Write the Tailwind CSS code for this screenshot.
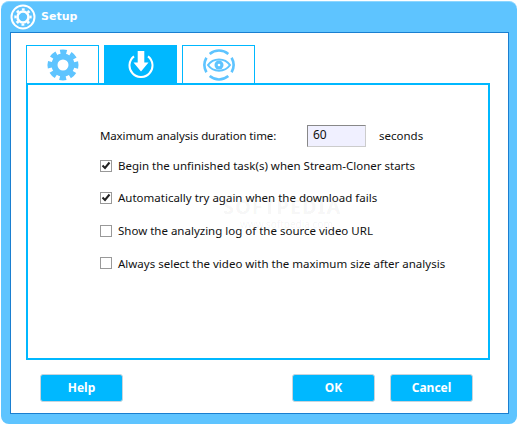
<!DOCTYPE html>
<html>
<head>
<meta charset="utf-8">
<title>Setup</title>
<script src="https://cdn.jsdelivr.net/npm/@tailwindcss/browser@4"></script>
</head>
<body class="bg-white">
<div class="w-[518px] h-[425px] bg-white pl-px pt-px font-['Noto_Sans','DejaVu_Sans',sans-serif] text-[11.5px] text-[#111]">
    <!-- window frame -->
    <div class="w-[516px] h-[423px] bg-[#5ec4ff] rounded-[8px] border-t border-t-[#8dd6ff] pl-[9px]">
        <!-- title bar -->
        <div class="h-[30px] flex items-center gap-[5px]">
            <svg width="26" height="26" viewBox="0 0 26 26">
                <circle cx="13" cy="13" r="11.5" fill="none" stroke="#fff" stroke-width="2"/>
                <circle cx="13" cy="13" r="5.5" fill="none" stroke="#fff" stroke-width="2.6"/>
                <circle cx="13" cy="13" r="7.6" fill="none" stroke="#fff" stroke-width="2.2" stroke-dasharray="2.8 3.17" transform="rotate(-10.5 13 13)"/>
            </svg>
            <span class="text-white font-bold text-[11px] font-['DejaVu_Sans',sans-serif]">Setup</span>
        </div>
        <!-- client area -->
        <div class="w-[499px] h-[382px] bg-white border border-[#1a7fd0] pt-[12px] pl-[15px] relative">
            <!-- tabs -->
            <div class="flex gap-[5px] h-[38px]">
                <div class="w-[73px] border border-b-0 border-[#00b8ff] flex items-center justify-center">
                    <svg width="32" height="32" viewBox="0 0 32 32">
                        <circle cx="16" cy="16" r="8.5" fill="none" stroke="#5ec4ff" stroke-width="6"/>
                        <circle cx="16" cy="16" r="12.5" fill="none" stroke="#5ec4ff" stroke-width="6" stroke-dasharray="6 3.82" transform="rotate(-13.75 16 16)"/>
                    </svg>
                </div>
                <div class="w-[73px] bg-[#00b8ff] flex items-center justify-center">
                    <svg width="28" height="28" viewBox="0 0 28 28">
                        <path d="M7 6.4A11.5 11.5 0 1 0 21 6.4" fill="none" stroke="#fff" stroke-width="2"/>
                        <path d="M10.7 1h6.6v11.5h4.2L14 21.5 6.5 12.5h4.2z" fill="#fff"/>
                    </svg>
                </div>
                <div class="w-[73px] border border-b-0 border-[#00b8ff] flex items-center justify-center">
                    <svg width="32" height="32" viewBox="0 0 32 32">
                        <path d="M6.68 4.89A14.5 14.5 0 0 1 25.32 4.89M28.56 8.75A14.5 14.5 0 0 1 28.56 23.25M25.32 27.11A14.5 14.5 0 0 1 6.68 27.11M3.44 23.25A14.5 14.5 0 0 1 3.44 8.75" fill="none" stroke="#5ec4ff" stroke-width="2.6"/>
                        <path d="M5 16C10 8.5 22 8.5 27 16C22 23.5 10 23.5 5 16Z" fill="#fff" stroke="#5ec4ff" stroke-width="2"/>
                        <circle cx="16" cy="16" r="4.5" fill="#5ec4ff"/>
                        <circle cx="16" cy="16" r="1.3" fill="#fff"/>
                    </svg>
                </div>
            </div>
            <!-- panel -->
            <div class="w-[464px] h-[277px] border-2 border-[#00b8ff] pl-[72px] pt-[40px]">
                <div class="flex items-center h-[22px] whitespace-nowrap">
                    <span class="w-[177px] tracking-[-0.13px]">Maximum analysis duration time:</span>
                    <div class="ml-[30px] w-[59px] h-[22px] bg-[#f0f0ff] border border-[#ccc] border-l-[#888] border-t-[#888] pl-[5px] leading-[18px] text-[12px]">60</div>
                    <span class="ml-[13px]">seconds</span>
                </div>
                <div class="flex flex-col gap-[15.6px] mt-[10px]">
                    <label class="flex items-center gap-[6px] h-[17px]">
                        <span class="w-[12px] h-[12px] border border-[#999] bg-white flex items-center justify-center">
                            <svg width="10" height="10" viewBox="0 0 10 10"><path d="M1.5 4.5 4 7 8.5 1.5" fill="none" stroke="#222" stroke-width="2"/></svg>
                        </span>
                        Begin the unfinished task(s) when Stream-Cloner starts
                    </label>
                    <label class="flex items-center gap-[6px] h-[17px]">
                        <span class="w-[12px] h-[12px] border border-[#999] bg-white flex items-center justify-center">
                            <svg width="10" height="10" viewBox="0 0 10 10"><path d="M1.5 4.5 4 7 8.5 1.5" fill="none" stroke="#222" stroke-width="2"/></svg>
                        </span>
                        Automatically try again when the download fails
                    </label>
                    <label class="flex items-center gap-[6px] h-[17px]">
                        <span class="w-[12px] h-[12px] border border-[#999] bg-white"></span>
                        Show the analyzing log of the source video URL
                    </label>
                    <label class="flex items-center gap-[6px] h-[17px]">
                        <span class="w-[12px] h-[12px] border border-[#999] bg-white"></span>
                        Always select the video with the maximum size after analysis
                    </label>
                </div>
            </div>
            <!-- buttons -->
            <div class="flex mt-[14px] ml-[14px] font-bold text-white text-[12px]">
                <button class="w-[83px] h-[28px] bg-[#00b8ff] rounded-[3px] border border-[#c8d4dc]">Help</button>
                <button class="ml-[169px] w-[83px] h-[28px] bg-[#00b8ff] rounded-[3px] border border-[#c8d4dc]">OK</button>
                <button class="ml-[15px] w-[83px] h-[28px] bg-[#00b8ff] rounded-[3px] border border-[#c8d4dc]">Cancel</button>
            </div>
            <!-- watermark -->
            <div class="absolute left-[212px] top-[159px] text-[20px] font-bold tracking-[1px] text-black/5">SOFTPEDIA</div>
            <div class="absolute left-[229px] top-[184px] text-[10px] text-black/5">www.softpedia.com</div>
        </div>
    </div>
</div>
</body>
</html>
